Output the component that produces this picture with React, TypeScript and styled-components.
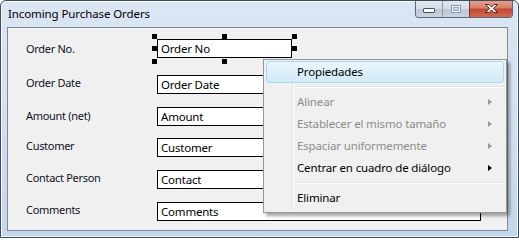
import styled, { createGlobalStyle } from "styled-components";

const GlobalStyle = createGlobalStyle`
  html, body {
    margin: 0;
    padding: 0;
    background: #ffffff;
  }
  body {
    font-family: "Noto Sans", "Open Sans", sans-serif;
  }
`;

const fields = [
  { label: "Order No.", value: "Order No", width: 135, top: 11, shift: 0, selected: true },
  { label: "Order Date", value: "Order Date", width: 200, top: 17, shift: -4 },
  { label: "Amount (net)", value: "Amount", width: 200, top: 13, shift: -3 },
  { label: "Customer", value: "Customer", width: 200, top: 12, shift: -4 },
  { label: "Contact Person", value: "Contact", width: 200, top: 13, shift: -4 },
  { label: "Comments", value: "Comments", width: 324, top: 13, shift: -4 },
];

const menuItems = [
  { text: "Propiedades", hot: true },
  { separator: true },
  { text: "Alinear", disabled: true, sub: true },
  { text: "Establecer el mismo tamaño", disabled: true, sub: true },
  { text: "Espaciar uniformemente", disabled: true, sub: true },
  { text: "Centrar en cuadro de diálogo", sub: true },
  { separator: true },
  { text: "Eliminar" },
];

const App = () => {
  return (
    <>
      <GlobalStyle />
      <Window>
        <TitleBar>
          <Title>Incoming Purchase Orders</Title>
          <Caption>
            <CaptionButton>
              <MinGlyph />
            </CaptionButton>
            <CaptionButton $divider>
              <MaxGlyph />
            </CaptionButton>
            <CloseButton>
              <svg width="17" height="11" viewBox="0 0 17 11">
                <path
                  d="M2.5 1.5h3.5l2.5 2.5 2.5-2.5h3.5l-4.2 4 4.2 4h-3.5l-2.5-2.5-2.5 2.5h-3.5l4.2-4z"
                  fill="#ffffff"
                  stroke="#5a2418"
                  strokeWidth="1"
                  strokeLinejoin="round"
                />
              </svg>
            </CloseButton>
          </Caption>
        </TitleBar>
        <Client>
          <Form>
            {fields.map((f) => (
              <Row key={f.label} $top={f.top}>
                <Label $shift={f.shift}>{f.label}</Label>
                <FieldWrap>
                  <Field $width={f.width}>{f.value}</Field>
                  {f.selected && (
                    <>
                      <Handle $x="-5px" $y="-5px" />
                      <Handle $x="-5px" $y="7px" />
                      <Handle $x="-5px" $y="20px" />
                      <Handle $x="65px" $y="-5px" />
                      <Handle $x="65px" $y="20px" />
                      <Handle $x="135px" $y="-5px" />
                      <Handle $x="135px" $y="7px" />
                    </>
                  )}
                </FieldWrap>
              </Row>
            ))}
          </Form>
          <Menu>
            {menuItems.map((m, i) =>
              m.separator ? (
                <Separator key={i} />
              ) : (
                <MenuItem key={i} $hot={m.hot} $disabled={m.disabled}>
                  <Gutter />
                  <MenuText>{m.text}</MenuText>
                  {m.sub && <Arrow $disabled={m.disabled} />}
                </MenuItem>
              )
            )}
          </Menu>
        </Client>
      </Window>
    </>
  );
};

export default App;

const Window = styled.div`
  width: 519px;
  height: 238px;
  box-sizing: border-box;
  border: 1px solid #3f4c5c;
  border-radius: 6px 6px 0 0;
  background: linear-gradient(to bottom, #dbe6f3 0%, #cfdeef 60%, #c3d6ec 100%);
  box-shadow: inset 0 0 0 1px rgba(255, 255, 255, 0.8);
  display: flex;
  flex-direction: column;
  overflow: hidden;
`;

const TitleBar = styled.div`
  height: 26px;
  display: flex;
  align-items: flex-start;
  justify-content: space-between;
  padding-left: 7px;
`;

const Title = styled.div`
  font-family: "Noto Sans", sans-serif;
  font-size: 11.5px;
  letter-spacing: -0.1px;
  color: #000;
  margin-top: 5px;
`;

const Caption = styled.div`
  display: flex;
  height: 17px;
  margin-right: 5px;
  margin-top: -1px;
  border: 1px solid #5a6878;
  border-top: none;
  border-radius: 0 0 4px 4px;
  overflow: hidden;
`;

const CaptionButton = styled.div<{ $divider?: boolean }>`
  width: 26px;
  height: 17px;
  display: flex;
  align-items: center;
  justify-content: center;
  background: linear-gradient(to bottom, #e3eaf2 0%, #d3dce7 50%, #bcc8d6 51%, #c8d3e0 100%);
  border-left: ${(p) => (p.$divider ? "1px solid #8c9aab" : "none")};
`;

const MinGlyph = styled.div`
  width: 10px;
  height: 3px;
  background: #fff;
  border: 1px solid #435266;
  border-radius: 1px;
  margin-top: 4px;
`;

const MaxGlyph = styled.div`
  width: 8px;
  height: 6px;
  border: 1px solid #8e9aa8;
  box-shadow: inset 0 0 0 1px #eef2f6, inset 0 0 0 2px #9ea9b6;
`;

const CloseButton = styled.div`
  width: 42px;
  height: 17px;
  display: flex;
  align-items: center;
  justify-content: center;
  border-left: 1px solid #6b3b33;
  background: linear-gradient(to bottom, #e6a595 0%, #d8806c 45%, #c24a33 55%, #cf6a52 100%);
`;

const Client = styled.div`
  position: relative;
  flex: 1;
  margin: 0 10px 6px 6px;
  border: 1px solid #808b97;
  background: #f0f0f0;
`;

const Form = styled.div`
  display: flex;
  flex-direction: column;
  padding-left: 18px;
`;

const Row = styled.div<{ $top: number }>`
  display: flex;
  align-items: center;
  height: 19px;
  margin-top: ${(p) => p.$top}px;
`;

const Label = styled.div<{ $shift: number }>`
  width: 131px;
  font-size: 11px;
  letter-spacing: -0.3px;
  color: #10101e;
  margin-top: ${(p) => p.$shift}px;
`;

const FieldWrap = styled.div`
  position: relative;
`;

const Field = styled.div<{ $width: number }>`
  width: ${(p) => p.$width}px;
  height: 19px;
  box-sizing: border-box;
  border: 1px solid #000;
  background: #fff;
  padding-left: 3px;
  font-size: 11.5px;
  letter-spacing: -0.2px;
  line-height: 17px;
  color: #000;
`;

const Handle = styled.div<{ $x: string; $y: string }>`
  position: absolute;
  left: ${(p) => p.$x};
  top: ${(p) => p.$y};
  width: 5px;
  height: 5px;
  background: #000;
`;

const Menu = styled.div`
  position: absolute;
  left: 255px;
  top: 31px;
  width: 244px;
  box-sizing: border-box;
  padding: 1px 2px 3px;
  border: 1px solid #979797;
  background: #f0f0f0;
  box-shadow: 3px 3px 3px rgba(0, 0, 0, 0.35);
  display: flex;
  flex-direction: column;

  &::before {
    content: "";
    position: absolute;
    left: 28px;
    top: 2px;
    bottom: 2px;
    width: 1px;
    background: #e2e3e3;
    border-right: 1px solid #ffffff;
  }
`;

const MenuItem = styled.div<{ $hot?: boolean; $disabled?: boolean }>`
  position: relative;
  z-index: 1;
  height: 22px;
  display: flex;
  align-items: center;
  box-sizing: border-box;
  border: 1px solid ${(p) => (p.$hot ? "#a8d8eb" : "transparent")};
  border-radius: 3px;
  background: ${(p) =>
    p.$hot ? "linear-gradient(to bottom, #eaf5fb 0%, #dcf0f9 50%, #d2ebf7 100%)" : "transparent"};
  color: ${(p) => (p.$disabled ? "#8d8d8d" : "#000")};
  font-size: 11.5px;
  letter-spacing: -0.15px;
`;

const Gutter = styled.div`
  width: 30px;
  align-self: stretch;
`;

const MenuText = styled.div`
  flex: 1;
  margin-top: -1px;
`;

const Arrow = styled.div<{ $disabled?: boolean }>`
  width: 0;
  height: 0;
  margin-right: 11px;
  border-top: 3.5px solid transparent;
  border-bottom: 3.5px solid transparent;
  border-left: 4px solid ${(p) => (p.$disabled ? "#9a9a9a" : "#000")};
`;

const Separator = styled.div`
  position: relative;
  z-index: 1;
  height: 0;
  margin: 3px 0 3px 28px;
  border-top: 1px solid #e0e0e0;
  border-bottom: 1px solid #ffffff;
`;
